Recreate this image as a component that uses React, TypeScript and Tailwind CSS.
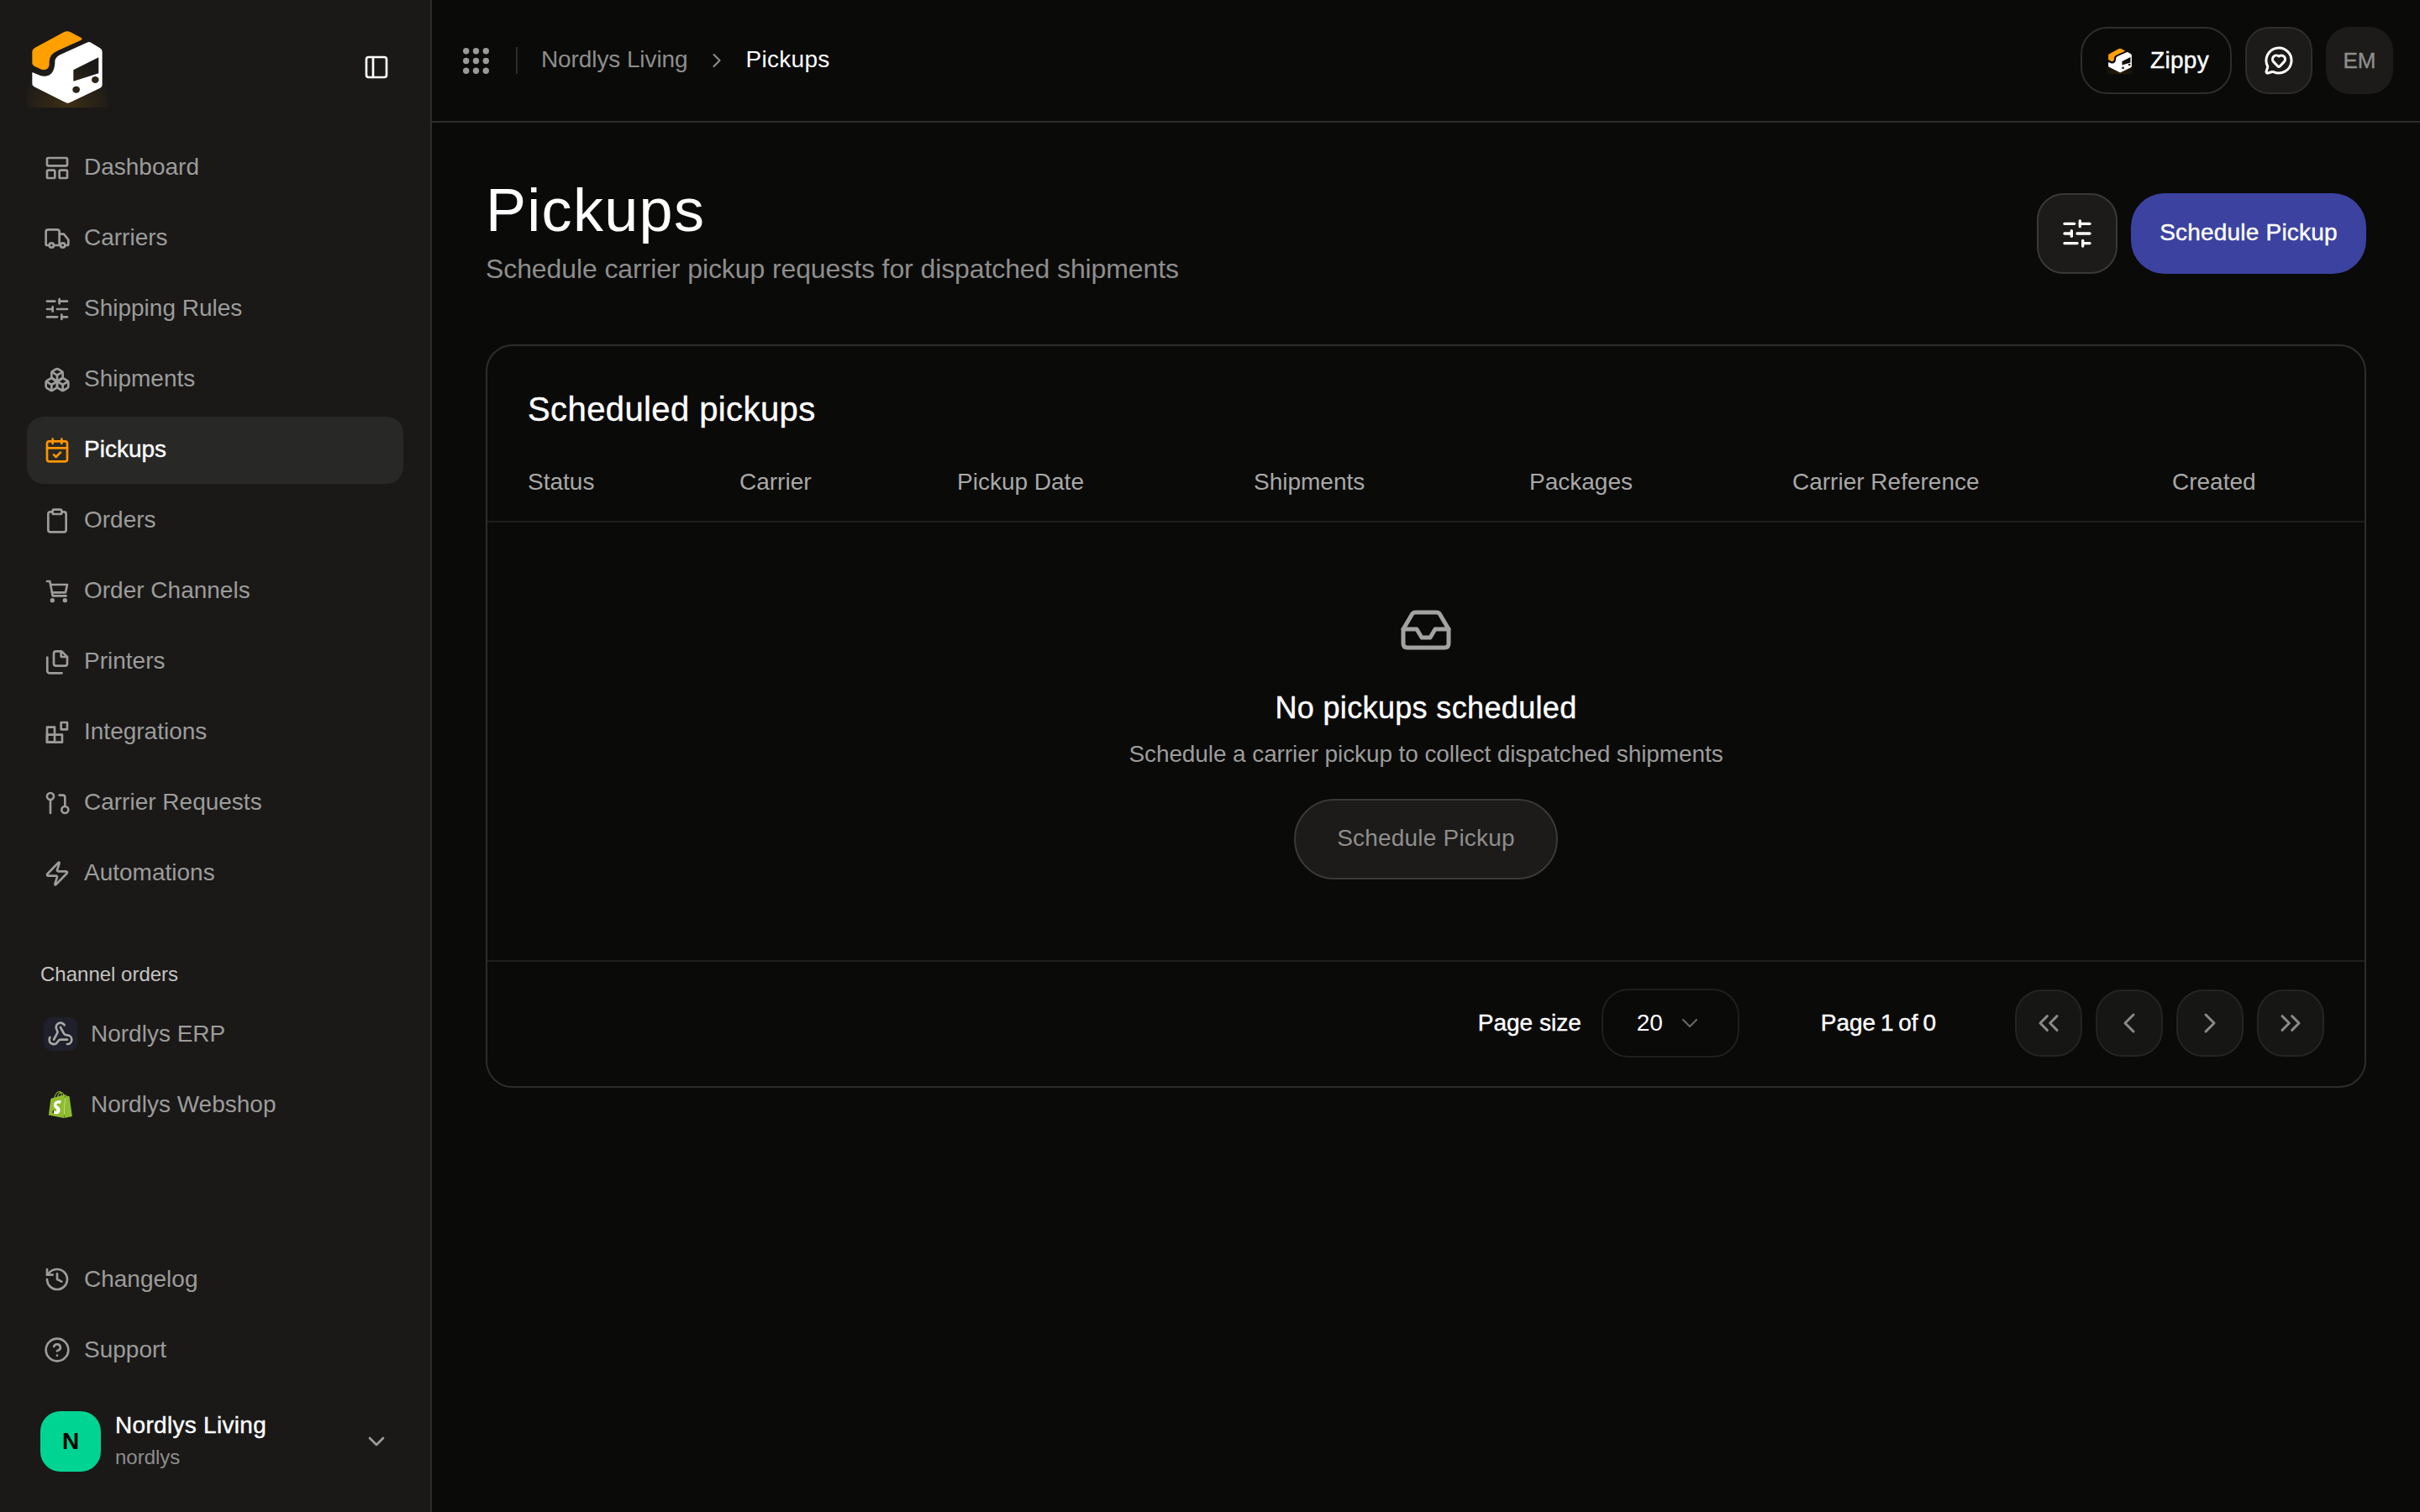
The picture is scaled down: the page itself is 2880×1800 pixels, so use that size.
import React from 'react';
import {
  Boxes,
  CalendarCheck,
  ChevronDown,
  ChevronLeft,
  ChevronRight,
  ChevronsLeft,
  ChevronsRight,
  CircleHelp,
  Clipboard,
  History,
  LayoutPanelTop,
  MessageCircleHeart,
  PanelLeft,
  SlidersHorizontal,
  Truck,
  Webhook,
  Zap,
} from 'lucide-react';
import { SiShopify } from 'react-icons/si';

type IconProps = { className?: string };

const Logo = ({ className }: IconProps) => (
  <svg className={className} viewBox="96 96 288 288">
    <defs>
      <radialGradient id="glow" cx="50%" cy="100%" r="60%">
        <stop offset="0%" stopColor="#ffa000" stopOpacity="0.16" />
        <stop offset="100%" stopColor="#ffa000" stopOpacity="0" />
      </radialGradient>
    </defs>
    <rect x="96" y="96" width="288" height="288" fill="url(#glow)" />
    <path
      fill="#ffa000"
      d="M228 115 Q240 109 252 115 L290 135 Q296 140 288 144 L208 180 Q176 194 176 220 L176 232 Q172 254 148 248 L122 236 Q115 232 115 226 L115 184 Q115 176 124 171 Z"
    />
    <path
      fill="#fff"
      fillRule="evenodd"
      d="M310 152 Q318 148 326 153 L356 171 Q365 176 365 186 L365 304 Q365 310 358 314 L250 366 Q242 370 234 366 L122 310 Q115 306 115 300 L115 258 L146 271 Q192 280 196 226 L196 218 Q198 204 214 196 Z M262 250 L262 290 L352 262 L352 205 Z"
    />
    <ellipse cx="272" cy="320" rx="13" ry="12" fill="#2b2417" />
    <ellipse cx="340" cy="285" rx="13" ry="12" fill="#2b2417" />
  </svg>
);

const Stroke = ({ className, children }: IconProps & { children: React.ReactNode }) => (
  <svg className={className} viewBox="0 0 24 24" fill="none" stroke="currentColor" strokeWidth={2} strokeLinecap="round" strokeLinejoin="round">
    {children}
  </svg>
);

const CartIcon = ({ className }: IconProps) => (
  <Stroke className={className}>
    <path d="M3 3h2.5L8 16h12" />
    <path d="M6.2 6H21l-1.5 7H7.5" />
    <circle cx="7.75" cy="20" r="1" />
    <circle cx="19" cy="20" r="1" />
  </Stroke>
);

const PagesIcon = ({ className }: IconProps) => (
  <Stroke className={className}>
    <path d="M9 4.5a2 2 0 0 1 2-2h5l5 5v6a2 2 0 0 1-2 2h-8a2 2 0 0 1-2-2z" />
    <path d="M15.5 2.5v4a1 1 0 0 0 1 1H21" />
    <path d="M3.2 8v12a2 2 0 0 0 2 2h11" />
  </Stroke>
);

const BlocksIcon = ({ className }: IconProps) => (
  <Stroke className={className}>
    <path d="M3 7.25h6.75v13.5H3z" />
    <path d="M3 14h13.5v6.75H3z" />
    <path d="M15.5 3H21v6.25h-5.5z" />
  </Stroke>
);

const RequestIcon = ({ className }: IconProps) => (
  <Stroke className={className}>
    <circle cx="6" cy="6" r="3" />
    <path d="M6 9v12" />
    <path d="M14 5h3a2 2 0 0 1 2 2v8" />
    <circle cx="19" cy="18" r="3" />
  </Stroke>
);

const InboxIcon = () => (
  <svg className="w-[60px] h-[48px] text-[#a3a3a1]" viewBox="0 0 60 48" fill="none" stroke="currentColor" strokeWidth={5} strokeLinejoin="round" strokeLinecap="round">
    <path d="M3 23 L13 6 Q14 3 18 3 H42 Q46 3 47 6 L57 23 V40 Q57 45 52 45 H8 Q3 45 3 40 Z" />
    <path d="M3 23 H19 L25 33 H35 L41 23 H57" />
  </svg>
);

const GripDots = () => (
  <svg className="w-[31px] h-[31px] text-[#9a9a98]" viewBox="0 0 31 31" fill="currentColor">
    {[3.7, 15.5, 27.3].map(y =>
      [3.7, 15.5, 27.3].map(x => <circle key={`${x}-${y}`} cx={x} cy={y} r="3.7" />),
    )}
  </svg>
);

const mainNav = [
  { label: 'Dashboard', icon: LayoutPanelTop },
  { label: 'Carriers', icon: Truck },
  { label: 'Shipping Rules', icon: SlidersHorizontal },
  { label: 'Shipments', icon: Boxes },
  { label: 'Pickups', icon: CalendarCheck, active: true },
  { label: 'Orders', icon: Clipboard },
  { label: 'Order Channels', icon: CartIcon },
  { label: 'Printers', icon: PagesIcon },
  { label: 'Integrations', icon: BlocksIcon },
  { label: 'Carrier Requests', icon: RequestIcon },
  { label: 'Automations', icon: Zap },
];

const columns = [
  { label: 'Status', w: 'w-[252px]' },
  { label: 'Carrier', w: 'w-[259px]' },
  { label: 'Pickup Date', w: 'w-[353px]' },
  { label: 'Shipments', w: 'w-[328px]' },
  { label: 'Packages', w: 'w-[313px]' },
  { label: 'Carrier Reference', w: 'w-[452px]' },
  { label: 'Created', w: 'w-[180px]' },
];

const pageButtons = [ChevronsLeft, ChevronLeft, ChevronRight, ChevronsRight];

// the reference face has a medium weight, Liberation only ships 400 and 700
const medium = '[-webkit-text-stroke:0.4px]';

export default function App() {
  return (
    <div className="flex w-[2880px] h-[1800px] overflow-hidden bg-[#0a0a09] text-[28px] font-['Liberation_Sans',sans-serif] text-white">
      {/* Sidebar */}
      <aside className="w-[514px] h-full shrink-0 flex flex-col bg-[#1a1918] border-r-2 border-[#2e2d2b] px-8 pt-8 pb-[47px]">
        <div className="flex items-center justify-between h-24 mb-8">
          <Logo className="w-24 h-24" />
          <PanelLeft className="w-8 h-8 mr-[16px] text-white" />
        </div>

        <nav className="flex flex-col gap-1">
          {mainNav.map(item => (
            <div
              key={item.label}
              className={`flex items-center gap-4 h-20 px-5 rounded-[20px] ${
                item.active ? 'bg-[#282827] text-white' : 'text-[#9c9c9a]'
              }`}
            >
              <item.icon className={`w-8 h-8 ${item.active ? 'text-[#ff9500]' : ''}`} />
              <span className={`pb-0.5 ${item.active ? medium : ''}`}>{item.label}</span>
            </div>
          ))}
        </nav>

        <div className="mt-16 px-4 text-[24px] leading-8 text-[#c4c4c2]">Channel orders</div>
        <div className="mt-[15px] flex flex-col gap-1 text-[#9c9c9a]">
          <div className="flex items-center gap-4 h-20 px-5">
            <span className="w-10 h-10 rounded-[10px] bg-[#20202c] flex items-center justify-center">
              <Webhook className="w-8 h-8 text-[#a8a8a6]" />
            </span>
            <span>Nordlys ERP</span>
          </div>
          <div className="flex items-center gap-4 h-20 px-5">
            <span className="relative w-10 h-10 flex items-center justify-center">
              <span className="absolute left-[12px] top-[12px] w-4 h-5 bg-white" />
              <SiShopify className="relative w-8 h-8 text-[#8fbc2f]" />
            </span>
            <span>Nordlys Webshop</span>
          </div>
        </div>

        <div className="mt-auto flex flex-col gap-1 text-[#9c9c9a]">
          <div className="flex items-center gap-4 h-20 px-5">
            <History className="w-8 h-8" />
            <span>Changelog</span>
          </div>
          <div className="flex items-center gap-4 h-20 px-5">
            <CircleHelp className="w-8 h-8" />
            <span>Support</span>
          </div>
        </div>

        <div className="mt-8 flex items-center pl-4 pr-4">
          <div className="w-[72px] h-[72px] rounded-[24px] bg-[#00d492] flex items-center justify-center text-black font-bold">N</div>
          <div className="ml-[17px] flex flex-col">
            <span className={`leading-9 tracking-[0.3px] text-white ${medium}`}>Nordlys Living</span>
            <span className="mt-0.5 text-[24px] leading-9 text-[#8e8e8c]">nordlys</span>
          </div>
          <ChevronDown className="ml-auto w-8 h-8 text-[#9c9c9a]" />
        </div>
      </aside>

      <div className="flex-1 min-w-0 flex flex-col">
        {/* Top bar */}
        <header className="h-[146px] shrink-0 flex items-center justify-between border-b-2 border-[#2e2d2b] pl-[37px] pr-8">
          <div className="flex items-center">
            <GripDots />
            <span className="ml-8 w-0.5 h-8 bg-[#2e2d2b]" />
            <span className="ml-7 pb-0.5 tracking-[-0.1px] text-[#8e8e8c]">Nordlys Living</span>
            <ChevronRight className="ml-[21px] w-7 h-7 text-[#8e8e8c]" strokeWidth={1.8} />
            <span className="ml-[20px] pb-0.5 tracking-[0.3px] text-white">Pickups</span>
          </div>
          <div className="flex items-center gap-4">
            <div className="flex items-center h-20 w-[180px] pl-[29px] rounded-[32px] border-2 border-[#2e2d2b]">
              <Logo className="w-[32px] h-[32px]" />
              <span className={`ml-[20px] tracking-[0.3px] ${medium}`}>Zippy</span>
            </div>
            <div className="w-20 h-20 flex items-center justify-center rounded-[28px] bg-[#1c1b1a] border-2 border-[#2e2d2b]">
              <MessageCircleHeart className="w-9 h-9 text-white" />
            </div>
            <div className={`w-20 h-20 flex items-center justify-center rounded-[28px] bg-[#1c1b1a] text-[26px] text-[#8e8e8c] ${medium}`}>EM</div>
          </div>
        </header>

        <main className="flex-1 px-16 pt-16">
          {/* Page heading */}
          <div className="flex items-start justify-between">
            <div>
              <h1 className="text-[72px] leading-[80px] tracking-[1.3px]">Pickups</h1>
              <p className="mt-2 text-[32px] leading-[44px] tracking-[-0.1px] text-[#8e8e8c]">Schedule carrier pickup requests for dispatched shipments</p>
            </div>
            <div className="flex items-center gap-4 pt-5">
              <div className="w-24 h-24 flex items-center justify-center rounded-[32px] bg-[#1c1b1a] border-2 border-[#3a3937]">
                <SlidersHorizontal className="w-10 h-10 text-white" />
              </div>
              <div className="h-24 w-[280px] flex items-center justify-center rounded-[40px] bg-[#3b429f] text-white">
                <span className={`pb-0.5 tracking-[0.2px] ${medium}`}>Schedule Pickup</span>
              </div>
            </div>
          </div>

          {/* Table card */}
          <section className="mt-[68px] h-[885px] flex flex-col rounded-[32px] border-2 border-[#2e2d2b]">
            <h2 className={`pl-12 pt-[51px] text-[40px] leading-[48px] tracking-[0.4px] ${medium}`}>Scheduled pickups</h2>
            <div className="flex items-center h-[111px] pl-12 pt-[17px] border-b-2 border-[#1f1f1d] text-[#a8a8a6]">
              {columns.map(col => (
                <div key={col.label} className={col.w}>{col.label}</div>
              ))}
            </div>

            <div className="flex-1 flex flex-col items-center pt-[104px] border-b-2 border-[#1f1f1d]">
              <InboxIcon />
              <div className={`mt-[47px] text-[36px] leading-[44px] tracking-[0.35px] ${medium}`}>No pickups scheduled</div>
              <div className="mt-[13px] leading-10 tracking-[-0.1px] text-[#9c9c9a]">Schedule a carrier pickup to collect dispatched shipments</div>
              <div className="mt-[33px] w-[314px] h-24 flex items-center justify-center rounded-full bg-[#1c1b1a] border-2 border-[#3a3937] text-[#8e8e8c]">
                <span className="pb-0.5 tracking-[0.2px]">Schedule Pickup</span>
              </div>
            </div>

            <div className="h-[148px] shrink-0 flex items-center justify-end pr-12 pb-[2px]">
              <span className={medium}>Page size</span>
              <div className="ml-6 w-[164px] h-[82px] flex items-center pl-10 rounded-[32px] border-2 border-[#1f1f1d]">
                <span>20</span>
                <ChevronDown className="ml-4 w-8 h-8 text-[#666664]" strokeWidth={1.6} />
              </div>
              <span className={`ml-[97px] [word-spacing:-2px] ${medium}`}>Page 1 of 0</span>
              <div className="ml-[94px] flex items-center gap-4">
                {pageButtons.map((Icon, i) => (
                  <div key={i} className="w-20 h-20 flex items-center justify-center rounded-[32px] bg-[#161615] border-2 border-[#242423]">
                    <Icon className="w-10 h-10 text-[#8a8a88]" strokeWidth={1.8} />
                  </div>
                ))}
              </div>
            </div>
          </section>
        </main>
      </div>
    </div>
  );
}
